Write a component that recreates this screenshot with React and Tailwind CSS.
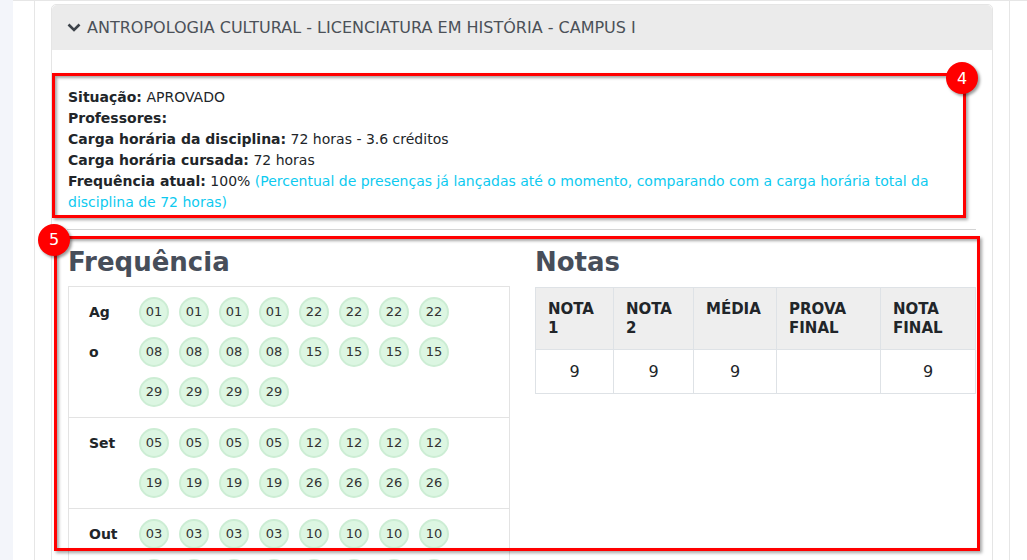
import { useState } from 'react';

const font = { fontFamily: '"DejaVu Sans", "Noto Sans", sans-serif' };

const attendance = [
  {
    month: 'Ago',
    days: ['01', '01', '01', '01', '22', '22', '22', '22', '08', '08', '08', '08', '15', '15', '15', '15', '29', '29', '29', '29'],
  },
  {
    month: 'Set',
    days: ['05', '05', '05', '05', '12', '12', '12', '12', '19', '19', '19', '19', '26', '26', '26', '26'],
  },
  {
    month: 'Out',
    days: ['03', '03', '03', '03', '10', '10', '10', '10', '17', '17', '17', '17', '24', '24', '24', '24', '31', '31', '31', '31'],
  },
];

const grades = [
  { label: ['NOTA', '1'], value: '9', width: 'w-[78px]' },
  { label: ['NOTA', '2'], value: '9', width: 'w-[80px]' },
  { label: ['MÉDIA'], value: '9', width: 'w-[83px]' },
  { label: ['PROVA', 'FINAL'], value: '', width: 'w-[104px]' },
  { label: ['NOTA', 'FINAL'], value: '9', width: 'w-[95px]' },
];

const annotationShadow =
  'shadow-[2px_2px_3px_rgba(0,0,0,0.35),inset_2px_2px_3px_rgba(0,0,0,0.35)]';

export default function App() {
  const [open, setOpen] = useState(true);

  return (
    <div className="flex h-[560px] w-full overflow-hidden bg-white" style={font}>
      <div className="w-[13px] shrink-0 bg-[#f3f5fa]" />
      <div className="w-[21px] shrink-0 border-t border-[#e6e6e6]" />
      <div className="w-[976px] shrink-0 border-x border-t border-[#e6e6e6] px-4 pt-[3px]">
        <div className="rounded-t-[5px] border border-[#e5e5e5]">
          <button
            onClick={() => setOpen(!open)}
            className="flex h-[45px] w-full items-center gap-[6px] rounded-t-[5px] bg-[#ebebeb] pl-[15px] text-left text-[16px] text-[#4b5158]"
          >
            <svg width="14" height="9" viewBox="0 0 14 9" fill="none">
              <path d="M1.5 1.5 L7 7 L12.5 1.5" stroke="#3d434a" strokeWidth="2.6" />
            </svg>
            ANTROPOLOGIA CULTURAL - LICENCIATURA EM HISTÓRIA - CAMPUS I
          </button>

          {open && (
            <div className="h-[600px] pt-[23px]">
              <InfoBox />
              <div className="ml-[15px] mt-[11px] h-px w-[909px] bg-[#d4d4d4]" />
              <ResultsBox />
            </div>
          )}
        </div>
      </div>
      <div className="flex-1 border-t border-[#e6e6e6]" />
    </div>
  );
}

function Badge({ n, className }) {
  return (
    <div
      className={`absolute z-20 flex h-8 w-8 items-center justify-center rounded-full bg-[#ff0000] text-[16px] text-white shadow-[2px_2px_3px_rgba(0,0,0,0.4)] ${className}`}
    >
      {n}
    </div>
  );
}

function InfoBox() {
  return (
    <div
      className={`relative w-[914px] border-[3px] border-[#ff0000] pb-[2px] pl-[13px] pt-[11px] text-[14px] leading-[21px] text-[#212529] ${annotationShadow}`}
    >
      <p>
        <b>Situação:</b> APROVADO
      </p>
      <p>
        <b>Professores:</b>
      </p>
      <p>
        <b>Carga horária da disciplina:</b> 72 horas - 3.6 créditos
      </p>
      <p>
        <b>Carga horária cursada:</b> 72 horas
      </p>
      <p>
        <b>Frequência atual:</b> 100%{' '}
        <span className="text-[#0dcaf0]">
          (Percentual de presenças já lançadas até o momento, comparando com a carga horária total da
          disciplina de 72 horas)
        </span>
      </p>
      <Badge n="4" className="-right-[15px] -top-[14px]" />
    </div>
  );
}

function ResultsBox() {
  return (
    <div className="relative ml-[2px] mt-[6px] h-[315px] w-[926px]">
      <div className="flex gap-[25px] pl-[14px] pt-[9px]">
        <div className="w-[442px]">
          <h2 className="mb-[7px] text-[26px] font-bold leading-[34px] text-[#474e5a]">Frequência</h2>
          <div className="border border-[#e3e3e3]">
            {attendance.map((row, i) => (
              <div key={row.month} className={`flex ${i > 0 ? 'border-t border-[#e3e3e3]' : ''}`}>
                <div className="w-[60px] shrink-0 pl-[20px] pt-[5px]">
                  <span className="block w-[29.5px] break-all text-[14px] font-bold leading-[40px] text-[#212529]">
                    {row.month}
                  </span>
                </div>
                <div className="flex w-[330px] flex-wrap p-[5px]">
                  {row.days.map((d, j) => (
                    <span
                      key={j}
                      className="m-[5px] flex h-[30px] w-[30px] items-center justify-center rounded-full border-2 border-[#ccedd4] bg-[#dcf6e2] text-[13px] text-[#333]"
                    >
                      {d}
                    </span>
                  ))}
                </div>
              </div>
            ))}
          </div>
        </div>

        <div className="w-[440px]">
          <h2 className="mb-[8px] text-[26px] font-bold leading-[34px] text-[#474e5a]">Notas</h2>
          <table className="w-[440px] table-fixed border-collapse text-[#212529]">
            <thead>
              <tr className="bg-[#eeeeee]">
                {grades.map((g, i) => (
                  <th
                    key={i}
                    className={`${g.width} h-[62px] border border-[#dee2e6] pl-[12px] pt-[12px] text-left align-top text-[15px] font-bold leading-[19px]`}
                  >
                    {g.label.map((l) => (
                      <span key={l} className="block">
                        {l}
                      </span>
                    ))}
                  </th>
                ))}
              </tr>
            </thead>
            <tbody>
              <tr>
                {grades.map((g, i) => (
                  <td key={i} className="h-[44px] border border-[#dee2e6] text-center text-[16px]">
                    {g.value}
                  </td>
                ))}
              </tr>
            </tbody>
          </table>
        </div>
      </div>

      <div
        className={`pointer-events-none absolute inset-0 z-10 border-[3px] border-[#ff0000] ${annotationShadow}`}
      />
      <Badge n="5" className="-left-[16px] -top-[12px]" />
    </div>
  );
}
